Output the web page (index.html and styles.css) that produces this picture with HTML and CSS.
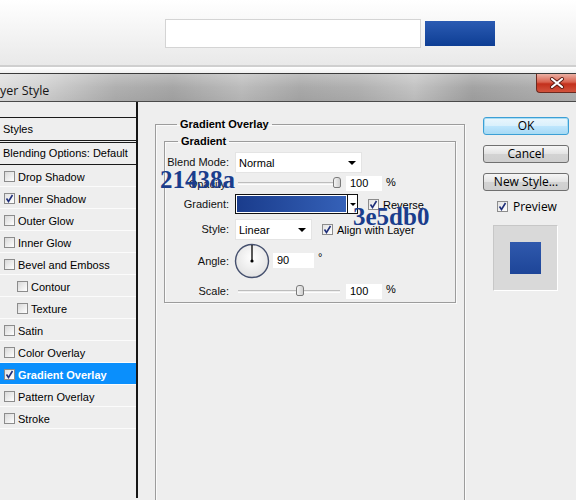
FILE: index.html
```html
<!DOCTYPE html>
<html lang="en">
<head>
  <meta charset="UTF-8" />
  <title>Layer Style</title>
  <link rel="stylesheet" href="styles.css">
</head>
<body>
  <div class="top-strip">
    <div class="search-box"></div>
    <div class="search-btn"></div>
  </div>
  <div class="strip-gap"></div>

  <div class="title-bar">
    <span class="title-text">yer Style</span>
    <div class="close-btn">
      <svg width="16" height="12" viewBox="0 0 16 12">
        <path d="M3 2 L13 10 M13 2 L3 10" stroke="#5a1a12" stroke-width="4" stroke-linecap="round"/>
        <path d="M3 2 L13 10 M13 2 L3 10" stroke="#fff" stroke-width="2.2" stroke-linecap="round"/>
      </svg>
    </div>
  </div>

  <div class="dialog">
    <div class="style-list">
      <div class="styles-head">Styles</div>
      <div class="blend-row">Blending Options: Default</div>
      <div class="item"><span class="cb"></span>Drop Shadow</div>
      <div class="item"><span class="cb on"><svg width="9" height="9" viewBox="0 0 9 9"><path d="M1.5 4.5 L3.5 7.5 L7.5 1" stroke="#1f2f7a" stroke-width="1.6" fill="none"/></svg></span>Inner Shadow</div>
      <div class="item"><span class="cb"></span>Outer Glow</div>
      <div class="item"><span class="cb"></span>Inner Glow</div>
      <div class="item"><span class="cb"></span>Bevel and Emboss</div>
      <div class="item sub"><span class="cb"></span>Contour</div>
      <div class="item sub"><span class="cb"></span>Texture</div>
      <div class="item"><span class="cb"></span>Satin</div>
      <div class="item"><span class="cb"></span>Color Overlay</div>
      <div class="item selected"><span class="cb on"><svg width="9" height="9" viewBox="0 0 9 9"><path d="M1.5 4.5 L3.5 7.5 L7.5 1" stroke="#1f2f7a" stroke-width="1.6" fill="none"/></svg></span>Gradient Overlay</div>
      <div class="item"><span class="cb"></span>Pattern Overlay</div>
      <div class="item"><span class="cb"></span>Stroke</div>
    </div>

    <div class="center">
      <fieldset class="group outer">
        <legend>Gradient Overlay</legend>
        <fieldset class="group inner">
          <legend>Gradient</legend>
          <div class="opt-row r1">
            <span class="lbl">Blend Mode:</span>
            <div class="select wide"><span>Normal</span><i class="tri"></i></div>
          </div>
          <div class="opt-row r2">
            <span class="lbl">Opacity:</span>
            <div class="slider"><i class="thumb" style="left: 95px"></i></div>
            <div class="num">100</div>
            <span class="unit">%</span>
            <span class="hex hex-a">21438a</span>
          </div>
          <div class="opt-row r3">
            <span class="lbl">Gradient:</span>
            <div class="grad-pick"><div class="grad-swatch"></div><div class="grad-arrow"><i class="tri small"></i></div></div>
            <span class="cb on"><svg width="9" height="9" viewBox="0 0 9 9"><path d="M1.5 4.5 L3.5 7.5 L7.5 1" stroke="#1f2f7a" stroke-width="1.6" fill="none"/></svg></span>
            <span class="cb-text">Reverse</span>
            <span class="hex hex-b">3e5db0</span>
          </div>
          <div class="opt-row r4">
            <span class="lbl">Style:</span>
            <div class="select short"><span>Linear</span><i class="tri"></i></div>
            <span class="cb on"><svg width="9" height="9" viewBox="0 0 9 9"><path d="M1.5 4.5 L3.5 7.5 L7.5 1" stroke="#1f2f7a" stroke-width="1.6" fill="none"/></svg></span>
            <span class="cb-text">Align with Layer</span>
          </div>
          <div class="opt-row r5">
            <span class="lbl">Angle:</span>
            <svg class="dial" width="36" height="36" viewBox="0 0 36 36">
              <defs>
                <radialGradient id="dialFill" cx="50%" cy="40%" r="60%">
                  <stop offset="0" stop-color="#ffffff"/>
                  <stop offset="1" stop-color="#e2e2e2"/>
                </radialGradient>
              </defs>
              <circle cx="18" cy="18" r="16.5" fill="url(#dialFill)" stroke="#45506e" stroke-width="1.4"/>
              <path d="M18 18 L18 2" stroke="#000" stroke-width="1.3"/>
              <circle cx="18" cy="18" r="1.6" fill="#000"/>
            </svg>
            <div class="num short-num">90</div>
            <span class="unit deg">°</span>
          </div>
          <div class="opt-row r6">
            <span class="lbl">Scale:</span>
            <div class="slider"><i class="thumb" style="left: 58px"></i></div>
            <div class="num">100</div>
            <span class="unit">%</span>
          </div>
        </fieldset>
      </fieldset>
    </div>

    <div class="actions">
      <div class="btn default">OK</div>
      <div class="btn">Cancel</div>
      <div class="btn">New Style...</div>
      <div class="preview-row">
        <span class="cb on"><svg width="9" height="9" viewBox="0 0 9 9"><path d="M1.5 4.5 L3.5 7.5 L7.5 1" stroke="#1f2f7a" stroke-width="1.6" fill="none"/></svg></span>
        <span>Preview</span>
      </div>
      <div class="preview-box"><div class="preview-swatch"></div></div>
    </div>
  </div>
</body>
</html>
```

FILE: styles.css
```css
* {
  margin: 0;
  padding: 0;
  box-sizing: border-box;
}

body {
  width: 576px;
  height: 500px;
  overflow: hidden;
  background: #eeeeee;
  font-family: 'Liberation Sans', Arial, sans-serif;
  font-size: 11px;
  color: #000;
}

/* browser-ish strip at the top */
.top-strip {
  height: 67px;
  background: linear-gradient(to bottom, #ffffff, #e9e9e9);
  display: flex;
  align-items: flex-start;
  padding-left: 165px;
  border-bottom: 2px solid #cfcfcf;
}

.search-box {
  margin-top: 19px;
  width: 256px;
  height: 29px;
  background: #fff;
  border: 1px solid #d4d4d4;
}

.search-btn {
  margin-top: 21px;
  margin-left: 4px;
  width: 70px;
  height: 25px;
  background: linear-gradient(to bottom, #2b5bb3, #0e3e94);
}

.strip-gap {
  height: 6px;
  background: linear-gradient(to bottom, #ffffff, #f0f0f0);
}

/* window title */
.title-bar {
  height: 29px;
  border-top: 1px solid #3a3a3a;
  border-bottom: 1px solid #4a4a4a;
  background:
    linear-gradient(to bottom, rgba(255,255,255,0.25), rgba(255,255,255,0) 50%, rgba(0,0,0,0.05)),
    linear-gradient(to right, #dedede 0, #d0d0d0 8%, #b0b0b0 20%, #a6a6a6 30%, #bcbcbc 42%, #a9a9a9 52%, #b0b0b0 62%, #c3c3c3 72%, #a3a3a3 82%, #b3b3b3 100%);
  display: flex;
  align-items: center;
  justify-content: space-between;
}

.title-text {
  font-family: 'Open Sans', 'Noto Sans', sans-serif;
  font-size: 12.5px;
  color: #151515;
  padding-top: 5px;
}

.close-btn {
  align-self: flex-start;
  width: 40px;
  height: 19px;
  background: linear-gradient(to bottom, #eab0a4, #d9624f 45%, #c3301c 55%, #d2533d);
  border: 1px solid #6c2a20;
  border-top: none;
  border-right: none;
  border-bottom-left-radius: 4px;
  display: flex;
  align-items: center;
  justify-content: center;
}

/* dialog body */
.dialog {
  display: flex;
  height: 396px;
}

.style-list {
  width: 138px;
  padding-top: 15px;
  border-right: 2px solid #161616;
}

.styles-head {
  height: 26px;
  border-top: 1px solid #1a1a1a;
  border-bottom: 3px double #1a1a1a;
  padding: 5px 3px 3px;
}

.blend-row {
  height: 22px;
  border-bottom: 1px solid #1a1a1a;
  padding: 4px 3px;
}

.item {
  height: 22px;
  border-bottom: 1px solid #fbfbfb;
  display: flex;
  align-items: center;
  padding-left: 4px;
  padding-top: 2px;
}

.item.sub {
  padding-left: 17px;
}

.item .cb {
  margin-right: 3px;
}

.item.selected {
  background: #0a8ffc;
  color: #fff;
  font-weight: bold;
}

.cb {
  width: 11px;
  height: 11px;
  flex: none;
  border: 1px solid #8c8c8c;
  background: linear-gradient(135deg, #d8d8d8, #ffffff);
  display: inline-flex;
  align-items: center;
  justify-content: center;
}

.cb.on {
  background: linear-gradient(135deg, #e2e2e2, #ffffff);
}

/* center column */
.center {
  width: 337px;
  padding-top: 16px;
  padding-left: 17px;
}

.group {
  border: 1px solid #9c9c9c;
  box-shadow: inset 1px 1px 0 #fafafa, 1px 1px 0 #fafafa;
}

.group legend {
  font-weight: bold;
  padding: 0 3px 0 3px;
  line-height: 13px;
}

.group.outer {
  width: 310px;
  height: 400px;
  padding: 0 8px 0 8px;
}

.group.outer > legend {
  margin-left: 13px;
}

.group.inner {
  width: 292px;
  height: 168px;
  margin-top: 4px;
  padding: 3px 0 0 0;
}

.group.inner > legend {
  margin-left: 13px;
}

.opt-row {
  display: flex;
  align-items: center;
  position: relative;
}

.r1 { height: 22px; }
.r2 { height: 21px; }
.r3 { height: 20px; }
.r4 { height: 30px; }
.r5 { height: 33px; }
.r6 { height: 28px; }

.lbl {
  width: 64px;
  margin-right: 6px;
  text-align: right;
  color: #111;
}

.select {
  height: 21px;
  background: #fff;
  border: 1px solid #e4e4e4;
  display: flex;
  align-items: center;
  justify-content: space-between;
  padding: 2px 5px 0 3px;
}

.select.wide { width: 127px; }
.select.short { width: 77px; margin-right: 10px; }

.tri {
  width: 0;
  height: 0;
  border-left: 4px solid transparent;
  border-right: 4px solid transparent;
  border-top: 4px solid #000;
}

.tri.small {
  border-left-width: 3px;
  border-right-width: 3px;
  border-top-width: 3px;
}

.slider {
  position: relative;
  width: 102px;
  height: 3px;
  margin-left: 3px;
  margin-right: 6px;
  border-top: 1px solid #bdbdbd;
  border-bottom: 1px solid #fdfdfd;
}

.thumb {
  position: absolute;
  top: -6px;
  width: 8px;
  height: 11px;
  border: 1px solid #7a7a7a;
  border-radius: 3px 3px 2px 2px;
  background: linear-gradient(to right, #f4f4f4, #cfcfcf);
}

.num {
  width: 36px;
  height: 15px;
  background: #fff;
  padding: 1px 4px;
  line-height: 13px;
}

.unit {
  margin-left: 4px;
  margin-top: -4px;
  font-size: 11px;
}

.unit.deg {
  margin-top: -7px;
}

.short-num {
  width: 41px;
  margin-left: 3px;
}

.dial {
  margin-left: -1px;
}

.grad-pick {
  display: flex;
  height: 20px;
  border: 1px solid #111;
  margin-right: 10px;
}

.grad-swatch {
  width: 111px;
  border: 1px solid #fff;
  background: linear-gradient(to right, #1a3c8c, #3561b8);
}

.grad-arrow {
  width: 10px;
  background: #fff;
  border-left: 1px solid #111;
  display: flex;
  align-items: center;
  justify-content: center;
}

.cb-text {
  margin-left: 4px;
  margin-top: 2px;
}

.hex {
  position: absolute;
  font-family: 'Liberation Serif', 'Times New Roman', serif;
  font-weight: bold;
  font-size: 25px;
  line-height: normal;
  color: #1a3d8c;
}

.hex-a {
  left: -5px;
  top: -7px;
}

.hex-b {
  left: 188px;
  top: 9px;
}

/* right column */
.actions {
  flex: 1;
  padding-top: 15px;
  padding-left: 8px;
}

.btn {
  width: 86px;
  height: 18px;
  margin-bottom: 10px;
  border: 1px solid #707070;
  border-radius: 3px;
  background: linear-gradient(to bottom, #f6f6f6, #e3e3e3 50%, #d3d3d3 51%, #cfcfcf);
  font-family: 'Open Sans', 'Noto Sans', sans-serif;
  font-size: 12px;
  line-height: 16px;
  text-align: center;
}

.btn.default {
  border-color: #3c9fd6;
  box-shadow: inset 0 0 0 1px #a8dcf2;
  background: linear-gradient(to bottom, #eaf6fd, #d9f0fc 50%, #bee6fd 51%, #a7d9f5);
}

.preview-row {
  display: flex;
  align-items: center;
  gap: 5px;
  padding-left: 14px;
  margin-top: -2px;
  height: 14px;
  font-family: 'Open Sans', 'Noto Sans', sans-serif;
  font-size: 12px;
}

.preview-box {
  width: 65px;
  height: 66px;
  margin-top: 12px;
  margin-left: 10px;
  background: #d9d9d9;
  border-right: 1px solid #fff;
  border-bottom: 1px solid #fff;
  border-top: 1px solid #c7c7c7;
  border-left: 1px solid #c7c7c7;
  padding: 16px 0 0 16px;
}

.preview-swatch {
  width: 31px;
  height: 32px;
  background: linear-gradient(to bottom, #3059ad, #1d4598);
}
```
